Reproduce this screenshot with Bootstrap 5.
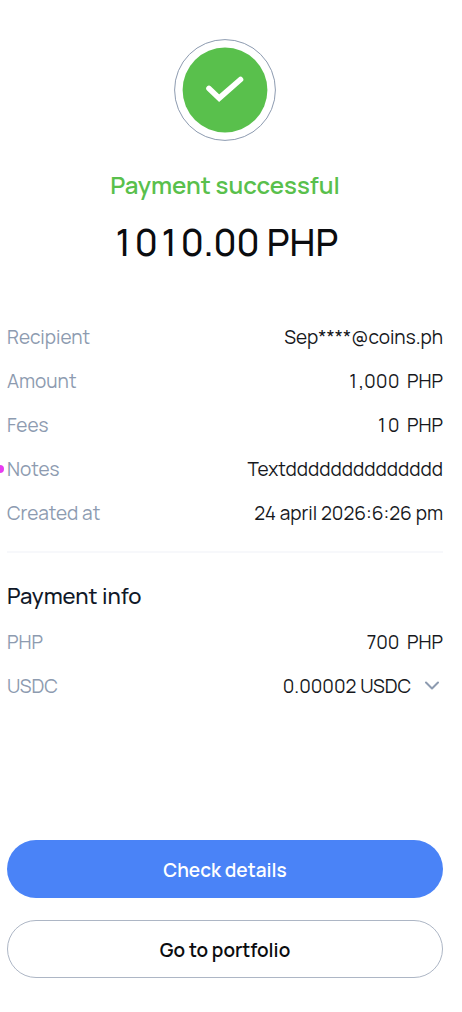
<!DOCTYPE html>
<html lang="en">
<head>
<meta charset="utf-8">
<meta name="viewport" content="width=device-width, initial-scale=1">
<title>Payment successful</title>
<link href="https://cdn.jsdelivr.net/npm/bootstrap@5.3.0/dist/css/bootstrap.min.css" rel="stylesheet">
<style>
  body { font-family: Manrope, Inter, sans-serif; font-size: 19px; line-height: 24px; color: #16181c; background: #fff; }
  .receipt { padding: 39px 19px 34px 7px; }
  .status-icon { width: 102px; height: 102px; }
  .status-title { font-size: 24px; line-height: 32px; font-weight: 600; color: #59c04c; margin: 28px 0 0; }
  .total { font-size: 37px; line-height: 48px; font-weight: 500; color: #0b0c0f; margin: 17px 0 0; }
  .tabular { font-variant-numeric: tabular-nums; }
  .details { display: flex; flex-direction: column; gap: 20px; }
  .details dt { font-weight: 400; color: #8d9bb0; }
  .summary { margin: 59px 0 0; }
  .divider { border: 0; border-top: 2px solid #f7f8fb; opacity: 1; margin: 26px 0 0; }
  .info-title { font-size: 22px; line-height: 28px; font-weight: 500; color: #101828; margin: 29px 0 20px; }
  .note-dot { position: absolute; left: -11px; top: 8px; width: 8px; height: 8px; border-radius: 50%; background: #e73cf0; }
  .toggle { width: 16px; height: 24px; margin: 0 4px 0 12px; }
  .action { min-height: 58px; padding: 8px 12px 6px; border-radius: 29px; font-size: 19px; line-height: 24px; font-weight: 600; }
  .action-main { background: #4a83f7; color: #fff; }
  .action-alt { border: 1px solid #adb6c5; color: #0b0c0f; background: #fff; }
  .actions { gap: 22px; }
</style>
</head>
<body>
<main class="receipt d-flex flex-column min-vh-100">
  <header class="text-center">
    <svg class="status-icon d-block mx-auto" viewBox="0 0 102 102" fill="none" aria-hidden="true">
      <circle cx="51" cy="51" r="50.4" stroke="#8d9bb0"/>
      <circle cx="51" cy="51" r="42.4" fill="#59c04c"/>
      <path d="M35 49.5 45.2 59.2 66.5 40.5" stroke="#fff" stroke-width="5.6" stroke-linecap="round"/>
    </svg>
    <h1 class="status-title">Payment successful</h1>
    <p class="total tabular">1010.00 PHP</p>
  </header>

  <dl class="details summary">
    <div class="d-flex justify-content-between"><dt>Recipient</dt><dd class="mb-0">Sep****@coins.ph</dd></div>
    <div class="d-flex justify-content-between"><dt>Amount</dt><dd class="mb-0 tabular">1,000 &nbsp;PHP</dd></div>
    <div class="d-flex justify-content-between"><dt>Fees</dt><dd class="mb-0 tabular">10 &nbsp;PHP</dd></div>
    <div class="d-flex justify-content-between position-relative"><dt><span class="note-dot"></span>Notes</dt><dd class="mb-0">Textdddddddddddddd</dd></div>
    <div class="d-flex justify-content-between"><dt>Created at</dt><dd class="mb-0">24 april 2026:6:26 pm</dd></div>
  </dl>
  <hr class="divider">

  <section>
    <h2 class="info-title">Payment info</h2>
    <dl class="details mb-0">
      <div class="d-flex justify-content-between"><dt>PHP</dt><dd class="mb-0">700 &nbsp;PHP</dd></div>
      <div class="d-flex justify-content-between"><dt>USDC</dt>
        <dd class="mb-0 d-flex align-items-center">0.00002 USDC
          <button type="button" class="btn border-0 p-0 toggle d-flex align-items-center" aria-label="Show more">
            <svg width="16" height="16" viewBox="0 0 16 16" fill="none" stroke="#8d9bb0" stroke-width="2" stroke-linecap="round" stroke-linejoin="round" aria-hidden="true"><path d="M3 4.5 9 10.5 15 4.5"/></svg>
          </button>
        </dd>
      </div>
    </dl>
  </section>

  <div class="actions d-flex flex-column mt-auto">
    <button type="button" class="btn border-0 action action-main w-100">Check details</button>
    <button type="button" class="btn action action-alt w-100">Go to portfolio</button>
  </div>
</main>
<script src="https://cdn.jsdelivr.net/npm/bootstrap@5.3.0/dist/js/bootstrap.bundle.min.js"></script>
</body>
</html>
